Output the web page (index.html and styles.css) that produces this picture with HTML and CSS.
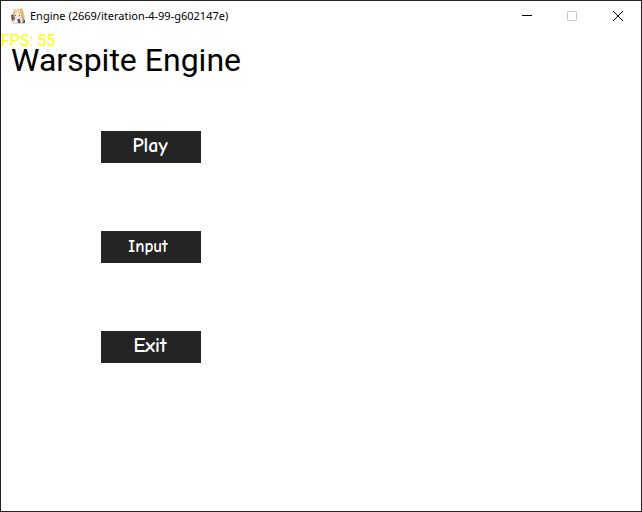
FILE: index.html
```html
<!DOCTYPE html>
<html lang="en">
<head>
<meta charset="utf-8">
<title>Engine (2669/iteration-4-99-g602147e)</title>
<link rel="stylesheet" href="styles.css">
</head>
<body>
<div class="window">
  <header class="titlebar">
    <svg class="app-icon" viewBox="0 0 16 16" aria-hidden="true">
      <path fill="#d9d3d3" d="M3 5l2-3 6-1 3 4 1 5-1 6H3L1 12z"/>
      <path fill="#5a5358" d="M1 7l3-1 1 5-3 2zM7 11h3l1 4H7zM12 11l3 1v3h-3z"/>
      <path fill="#eab765" d="M4 1l2 1 4-1 2-1 1 3 1 5-1 3-2-4-2-2-3 1-2 4-1-4z"/>
      <path fill="#f6d99b" d="M5 2h5l1 2-6 1z"/>
      <path fill="#fbe5d6" d="M5 5l3-1 3 2v3l-3 2-3-2z"/>
      <path fill="#74504c" d="M5 7h1v1H5zM9 7h1v1H9z"/>
      <path fill="#f7f4f4" d="M5 11l2-1 1 5H4zM10 11l2-1 1 4-2 1z"/>
      <path fill="#c79a64" d="M13 8l1 3-1 4-1-4zM4 9l1 3-2 1z"/>
    </svg>
    <span class="caption">Engine (2669/iteration-4-99-g602147e)</span>
    <div class="controls">
      <button class="control" aria-label="Minimize"><svg viewBox="0 0 10 10"><path d="M1 4.5h10"/></svg></button>
      <button class="control" aria-label="Maximize" disabled><svg viewBox="0 0 10 10"><path d="M.5.5h9v9h-9z"/></svg></button>
      <button class="control close" aria-label="Close"><svg viewBox="0 0 10 10"><path d="M0 0l10 10M10 0L0 10"/></svg></button>
    </div>
  </header>
  <main class="view">
    <div class="fps">FPS: 55</div>
    <h1>Warspite Engine</h1>
    <nav class="menu">
      <button class="item">Play</button>
      <button class="item compact">Input</button>
      <button class="item">Exit</button>
    </nav>
  </main>
</div>
</body>
</html>
```
FILE: styles.css
```css
* { box-sizing: border-box; }

body { margin: 0; background: #fff; }

button { border: 0; padding: 0; }

.window {
  min-height: 100vh;
  border: 1px solid #232124;
  background: #fff;
}

.titlebar {
  display: flex;
  align-items: center;
  height: 30px;
  padding-left: 9px;
  font: 11px/16px "Segoe UI", "Noto Sans", sans-serif;
  color: #000;
}

.app-icon { width: 16px; height: 16px; margin-right: 4px; }

.controls { display: flex; margin-left: auto; }

.control {
  display: flex;
  align-items: center;
  justify-content: center;
  width: 46px;
  height: 28px;
  background: none;
}

.control svg {
  width: 10px;
  height: 10px;
  overflow: visible;
  fill: none;
  stroke: #000;
}

.control:disabled svg { stroke: #ccc; }

.view {
  position: relative;
  padding: 9px 10px;
  font-family: Roboto, sans-serif;
}

.fps {
  position: absolute;
  top: 0;
  left: 0;
  font-size: 16px;
  line-height: 20px;
  color: #ff0;
}

h1 {
  position: relative;
  margin: 0;
  font-size: 32px;
  line-height: 40px;
  font-weight: 400;
  color: #000;
}

.menu {
  display: grid;
  justify-content: start;
  gap: 68px;
  padding: 51px 90px;
}

.item {
  width: 100px;
  height: 32px;
  padding: 0 2px 2px 0;
  background: #242424;
  color: #fff;
  font: 700 20px/24px "Comic Neue", Lato, sans-serif;
}

.compact { padding: 0 6px 0 0; font-size: 17px; }
```
